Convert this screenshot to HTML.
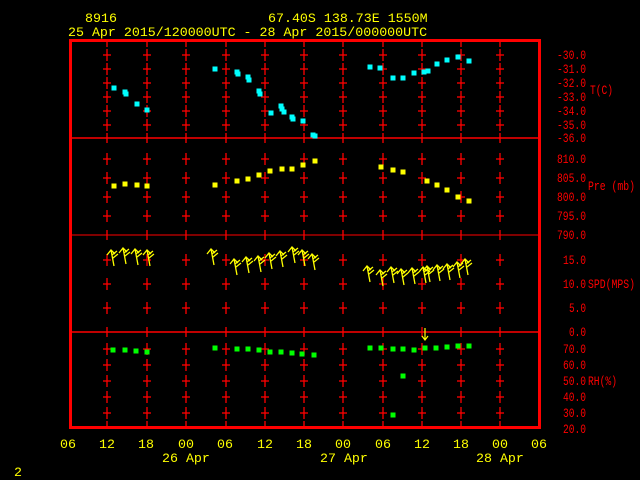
<!DOCTYPE html>
<html><head><style>
html,body{margin:0;padding:0;background:#000;width:640px;height:480px;overflow:hidden}
svg{display:block}
text{font-family:"Liberation Mono",monospace;font-size:13.3px}
.r text{font-size:12.5px}
</style></head><body>
<svg id="s" width="640" height="480" xmlns="http://www.w3.org/2000/svg">
<g fill="#ffff00">
<text x="85" y="22">8916</text>
<text x="268" y="22">67.40S  138.73E  1550M</text>
<text x="68" y="36">25 Apr 2015/120000UTC - 28 Apr 2015/000000UTC</text>
<text x="60" y="448">06</text><text x="99" y="448">12</text><text x="138" y="448">18</text><text x="178" y="448">00</text>
<text x="217" y="448">06</text><text x="257" y="448">12</text><text x="296" y="448">18</text><text x="335" y="448">00</text>
<text x="375" y="448">06</text><text x="414" y="448">12</text><text x="453" y="448">18</text><text x="492" y="448">00</text><text x="531" y="448">06</text>
<text x="162" y="462">26 Apr</text><text x="320" y="462">27 Apr</text><text x="476" y="462">28 Apr</text>
<text x="14" y="476">2</text>
</g>
<g id="rl" fill="#ff0000" class="r"></g>
<g id="grid" stroke="#ff0000" stroke-width="1.3"></g>
<rect x="70.5" y="40.5" width="469" height="387" fill="none" stroke="#ff0000" stroke-width="3"/>
<g id="dat"></g>
</svg>
<script>
var NS="http://www.w3.org/2000/svg";
function el(p,t,a){var e=document.createElementNS(NS,t);for(var k in a)e.setAttribute(k,a[k]);p.appendChild(e);return e;}
var rl=document.getElementById('rl');
function lab(s,x,y,right){var t=el(rl,'text',{x:right?x-s.length*6:x,y:y,textLength:s.length*6-1,lengthAdjust:'spacingAndGlyphs'});t.textContent=s;}
[['-30.0',59],['-31.0',73],['-32.0',87],['-33.0',101],['-34.0',115],['-35.0',129],['-36.0',142],
 ['810.0',163],['805.0',182],['800.0',201],['795.0',220],['790.0',239],
 ['15.0',264],['10.0',288],['5.0',312],['0.0',336],
 ['70.0',353],['60.0',369],['50.0',385],['40.0',401],['30.0',417],['20.0',433]].forEach(function(a){lab(a[0],587,a[1],true);});
lab('T(C)',590,94);lab('Pre (mb)',588,190);lab('SPD(MPS)',588,288);lab('RH(%)',588,385);
var g=document.getElementById('grid'),d=document.getElementById('dat');
[138,235,332].forEach(function(y){el(g,'line',{x1:70,x2:540,y1:y,y2:y,'stroke-width':y==235?1:1.6});});
var xs=[107,147,186,226,265,304,343,383,422,461,500];
var ys=[55,69,83,97,111,125,159,178,197,216,260,284,308,349,365,381,397,413];
xs.forEach(function(x){
 ys.forEach(function(y){el(g,'line',{x1:x,x2:x,y1:y-6,y2:y+6});el(g,'line',{x1:x-4,x2:x+4,y1:y,y2:y});});
 [138,235,332].forEach(function(y){el(g,'line',{x1:x,x2:x,y1:y-5,y2:y+5});});
 el(g,'line',{x1:x,x2:x,y1:41,y2:47});el(g,'line',{x1:x,x2:x,y1:421,y2:427});
});
function sq(pts,c){pts.forEach(function(p){el(d,'rect',{x:p[0]-2.5,y:p[1]-2.5,width:5,height:5,fill:c});});}
sq([[114,88],[125,92],[126,94],[137,104],[147,110],[215,69],[237,72],[238,74],[248,77],[249,80],[259,91],[260,94],[271,113],[281,106],[282,109],[284,112],[292,117],[293,119],[303,121],[313,135],[315,136],[370,67],[380,68],[393,78],[403,78],[414,73],[424,72],[428,71],[437,64],[447,60],[458,57],[469,61]],'#00ffff');
sq([[114,186],[125,184],[137,185],[147,186],[215,185],[237,181],[248,179],[259,175],[270,171],[282,169],[292,169],[303,165],[315,161],[381,167],[393,170],[403,172],[427,181],[437,185],[447,190],[458,197],[469,201]],'#ffff00');
sq([[113,350],[125,350],[136,351],[147,352],[215,348],[237,349],[248,349],[259,350],[270,352],[281,352],[292,353],[302,354],[314,355],[370,348],[381,348],[393,349],[403,349],[414,350],[425,348],[436,348],[447,347],[458,346],[469,346],[403,376],[393,415]],'#00ff00');
var w=[[111,256],[123,254],[135,255],[147,256],[211,255],[234,265],[246,263],[258,262],[269,259],[280,257],[292,253],[302,256],[312,260],[367,272],[380,276],[391,273],[401,275],[412,274],[423,273],[427,272],[437,271],[447,270],[457,268],[465,265]];
w.forEach(function(p){var x=p[0],y=p[1];
 el(d,'path',{d:'M'+(x+3)+' '+(y+10)+' L'+x+' '+(y-6)+' M'+(x-4)+' '+(y-1)+' L'+x+' '+(y-6)+' L'+(x+4)+' '+(y-2)+' M'+(x+1)+' '+(y-1)+' L'+(x+6)+' '+(y-5)+' M'+(x+2)+' '+(y+2)+' L'+(x+7)+' '+(y-2),stroke:'#ffff00','stroke-width':1.3,fill:'none'});});
el(d,'path',{d:'M425 328 L425 340 M422 336 L425 340 L428 336',stroke:'#ffff00','stroke-width':1.2,fill:'none'});
</script>
</body></html>
